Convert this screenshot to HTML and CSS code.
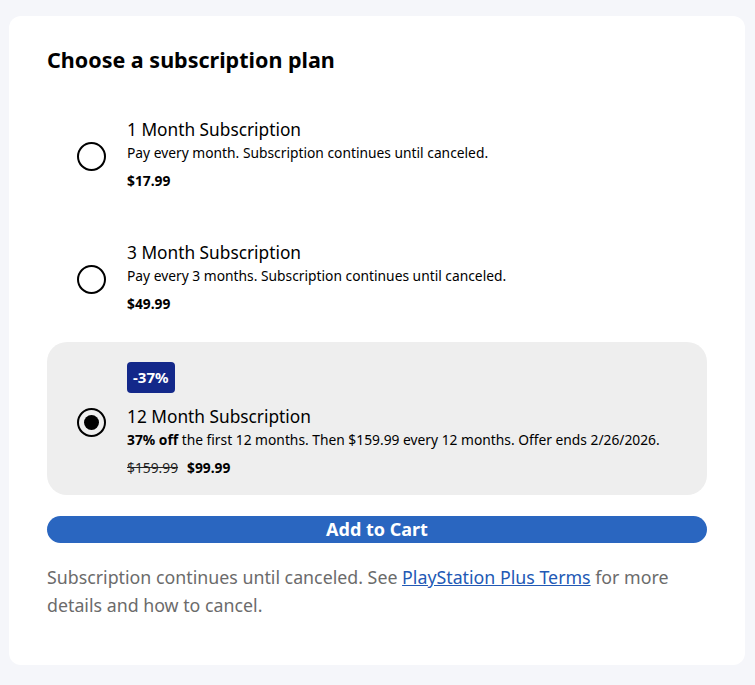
FILE: index.html
```html
<!DOCTYPE html>
<html lang="en">
<head>
<meta charset="utf-8">
<title>Choose a subscription plan</title>
<link rel="stylesheet" href="styles.css">
</head>
<body>
<main class="card">
  <h2 class="heading">Choose a subscription plan</h2>
  <div class="options">
    <label class="option">
      <span class="radio"></span>
      <span class="info">
        <span class="title">1 Month Subscription</span>
        <span class="desc">Pay every month. Subscription continues until canceled.</span>
        <span class="price"><b>$17.99</b></span>
      </span>
    </label>
    <label class="option">
      <span class="radio"></span>
      <span class="info">
        <span class="title">3 Month Subscription</span>
        <span class="desc">Pay every 3 months. Subscription continues until canceled.</span>
        <span class="price"><b>$49.99</b></span>
      </span>
    </label>
    <label class="option selected">
      <span class="radio checked"></span>
      <span class="info">
        <span class="badge">-37%</span>
        <span class="title">12 Month Subscription</span>
        <span class="desc"><b>37% off</b> the first 12 months. Then $159.99 every 12 months. Offer ends 2/26/2026.</span>
        <span class="price"><s>$159.99</s><b>$99.99</b></span>
      </span>
    </label>
  </div>
  <button class="cart">Add to Cart</button>
  <p class="note">Subscription continues until canceled. See <a href="#">PlayStation Plus Terms</a> for more details and how to cancel.</p>
</main>
</body>
</html>
```

FILE: styles.css
```css
* { box-sizing: border-box; }
html, body { margin: 0; }
body {
  background: #f5f6fa;
  padding: 16px 10px 20px 9px;
  font-family: "Noto Sans", "Open Sans", sans-serif;
  color: #000;
}
.card {
  background: #fff;
  border-radius: 12px;
  padding: 30px 38px 46px 38px;
}
.heading {
  margin: 0;
  font-size: 21.5px;
  line-height: 28px;
  font-weight: 700;
}
.options {
  margin-top: 25px;
  display: flex;
  flex-direction: column;
  gap: 11px;
}
.option {
  display: flex;
  align-items: center;
  gap: 21px;
  padding: 19px 20px 19px 30px;
  border-radius: 20px;
}
.option.selected {
  background: #eeeeee;
  margin-top: -3px;
  padding-top: 20px;
  padding-bottom: 16px;
}
.radio {
  flex: none;
  width: 29px;
  height: 29px;
  border: 2px solid #000;
  border-radius: 50%;
  display: flex;
  align-items: center;
  justify-content: center;
  margin-top: 2px;
}
.option.selected .radio { margin-top: 4px; }
.radio.checked::after {
  content: "";
  width: 15px;
  height: 15px;
  border-radius: 50%;
  background: #000;
}
.info { display: flex; flex-direction: column; }
.badge {
  align-self: flex-start;
  background: #13288a;
  color: #fff;
  font-weight: 700;
  font-size: 15px;
  line-height: 31px;
  padding: 0 6px;
  border-radius: 4px;
  margin-bottom: 12px;
}
.title { font-size: 17.3px; line-height: 24px; }
.desc { font-size: 13.8px; line-height: 22px; }
.desc b { font-weight: 700; }
.price {
  font-size: 13.8px;
  line-height: 22px;
  margin-top: 6px;
  display: flex;
  gap: 9px;
}
.price s { color: #222; }
.cart {
  display: block;
  width: 100%;
  margin-top: 21px;
  height: 27px;
  border: none;
  border-radius: 14px;
  background: #2a66c0;
  color: #fff;
  font-family: inherit;
  font-size: 18px;
  font-weight: 700;
  line-height: 27px;
  padding: 0;
}
.note {
  margin: 20px 0 0;
  font-size: 17.8px;
  line-height: 28px;
  color: #6b6b6b;
}
.note a { color: #2259b5; }
```
